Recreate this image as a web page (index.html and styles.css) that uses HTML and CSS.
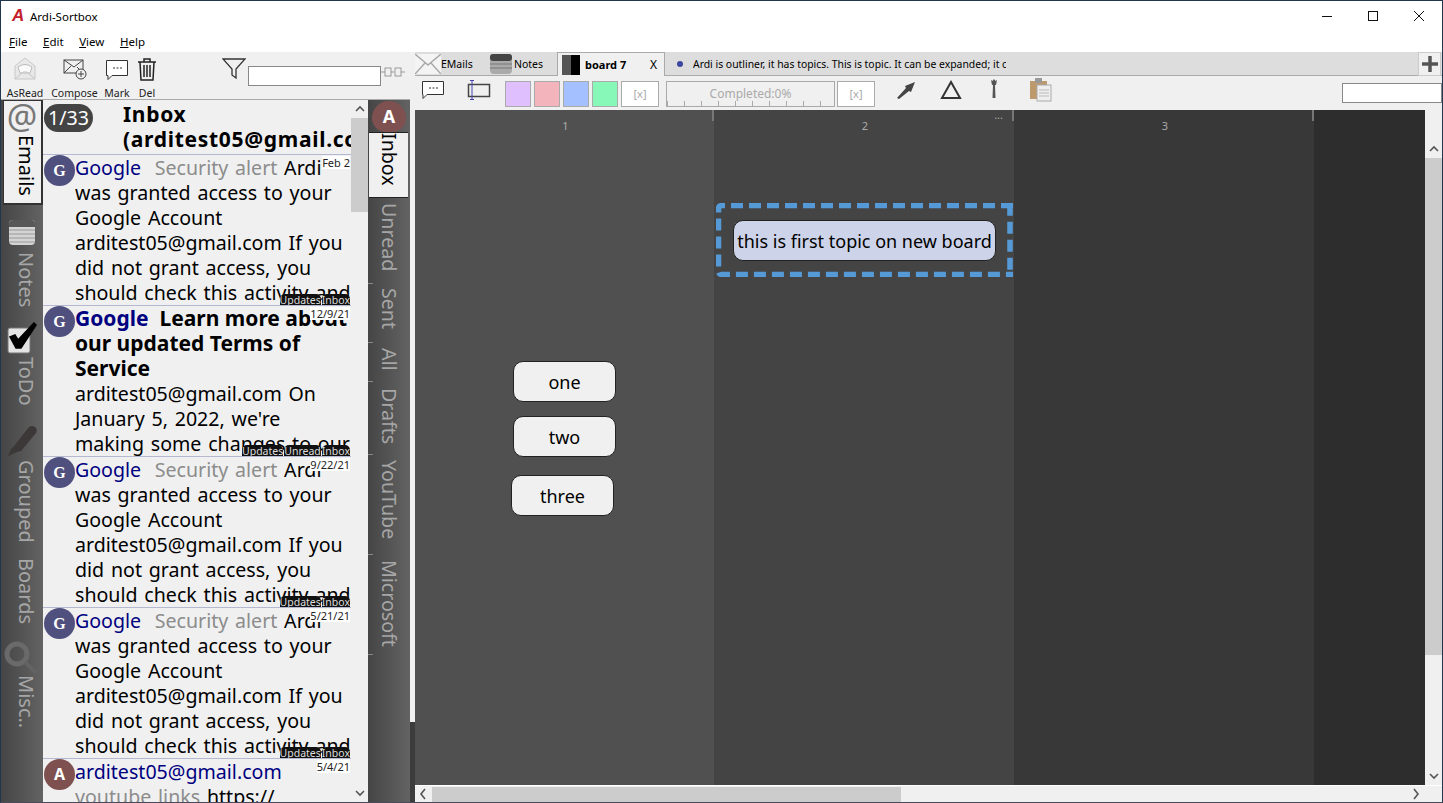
FILE: index.html
```html
<!DOCTYPE html>
<html lang="en">

<head>
    <meta charset="UTF-8">
    <title>Ardi-Sortbox</title>
    <link rel="stylesheet" href="styles.css">
</head>

<body>
    <div class="window">
        <div class="titlebar">
            <span class="logo">A</span>
            <span class="title">Ardi-Sortbox</span>
            <div class="wincontrols">
                <svg width="12" height="12" viewBox="0 0 12 12"><path d="M1 6.500h10" stroke="#111" fill="none"/></svg>
                <svg width="12" height="12" viewBox="0 0 12 12"><rect x="1.500" y="1.500" width="9" height="9" stroke="#111" fill="none"/></svg>
                <svg width="12" height="12" viewBox="0 0 12 12"><path d="M1 1l10 10M11 1L1 11" stroke="#111" fill="none"/></svg>
            </div>
        </div>
        <div class="menubar">
            <span><u>F</u>ile</span>
            <span><u>E</u>dit</span>
            <span><u>V</u>iew</span>
            <span><u>H</u>elp</span>
        </div>
        <div class="main">
            <div class="leftpane">
                <div class="mailtools">
                    <div class="toolbtn asread">
                        <svg width="24" height="24" viewBox="0 0 24 24"><path d="M2 9L12 1l10 8v13H2z" fill="#e8e8e8" stroke="#c8c8c8"/><path d="M5 10q7-5 14 0l-2 6H7z" fill="#fafafa" stroke="#bbb"/><path d="M2 22l8-7h4l8 7" fill="none" stroke="#c4c4c4"/></svg>
                        <span>AsRead</span>
                    </div>
                    <div class="toolbtn compose">
                        <svg width="24" height="24" viewBox="0 0 24 24"><rect x="1" y="3" width="19" height="13" fill="none" stroke="#444"/><path d="M1 3l10 7 9-7M1 16l7-7M20 16l-6-6" fill="none" stroke="#444"/><circle cx="18" cy="17" r="5" fill="#f0f0f0" stroke="#444"/><path d="M18 14v6M15 17h6" stroke="#444"/></svg>
                        <span>Compose</span>
                    </div>
                    <div class="toolbtn mark">
                        <svg width="24" height="24" viewBox="0 0 24 24"><path d="M1.500 3.500h21v15H7l-4 4v-4H1.500z" fill="#fff" stroke="#333"/><path d="M8 11h2M11.500 11h2M15 11h2" stroke="#333"/></svg>
                        <span>Mark</span>
                    </div>
                    <div class="toolbtn del">
                        <svg width="20" height="24" viewBox="0 0 20 24"><path d="M1 5h18M7 5V2h6v3" fill="none" stroke="#222" stroke-width="1.500"/><path d="M3 5l1 18h12l1-18" fill="none" stroke="#222" stroke-width="1.500"/><path d="M7 8v12M10 8v12M13 8v12" stroke="#222" stroke-width="1.500"/></svg>
                        <span>Del</span>
                    </div>
                    <svg class="filter" width="24" height="22" viewBox="0 0 24 22"><path d="M1 1h22l-9 10v9l-4-3v-6z" fill="none" stroke="#333" stroke-width="1.300"/></svg>
                    <input class="filterbox" type="text">
                    <svg class="plug" width="24" height="12" viewBox="0 0 24 12"><path d="M0 6h4M10 6h3M20 6h4" stroke="#999"/><rect x="4" y="2" width="6" height="8" fill="none" stroke="#999"/><rect x="14" y="2" width="6" height="8" fill="none" stroke="#999"/></svg>
                </div>
                <div class="mailbody">
                    <div class="rail leftrail">
                        <div class="railtab active emailstab">
                            <span class="at">@</span>
                            <span class="vtext">Emails</span>
                        </div>
                        <div class="railtab notestab">
                            <svg width="26" height="25" viewBox="0 0 26 25"><rect x="0" y="0" width="26" height="25" rx="4" fill="#d4d4d4"/><path d="M0 10h26M0 14h26M0 18h26M0 22h26" stroke="#999"/><path d="M0 7V4q0-4 4-4h18q4 0 4 4v3z" fill="#585858"/></svg>
                            <span class="vtext">Notes</span>
                        </div>
                        <div class="railtab todotab">
                            <svg width="30" height="32" viewBox="0 0 30 32"><rect x="1" y="6" width="22" height="25" rx="2" fill="#e4e4e4" stroke="#777"/><path d="M3 15l5-2 3 5L27 1l2 2-15 23H9z" fill="#000" stroke="#000" stroke-width="1.500"/></svg>
                            <span class="vtext">ToDo</span>
                        </div>
                        <div class="railtab groupedtab">
                            <svg width="30" height="31" viewBox="0 0 30 31"><path d="M1 31l3-7 3-3L22 2q3-2 6 0t1 6L14 26l-4 1z" fill="#3c3838"/></svg>
                            <span class="vtext">Grouped</span>
                        </div>
                        <div class="railtab boardstab">
                            <span class="vtext">Boards</span>
                        </div>
                        <div class="railtab misctab">
                            <svg width="34" height="34" viewBox="0 0 34 34"><circle cx="14" cy="14" r="10" fill="none" stroke="#6a6a6a" stroke-width="5"/><path d="M22 22l11 11" stroke="#636363" stroke-width="4"/></svg>
                            <span class="vtext">Misc..</span>
                        </div>
                    </div>
                    <div class="maillist">
                        <div class="listhead">
                            <span class="counter">1/33</span>
                            <div class="foldername">Inbox<br>(arditest05@gmail.com)</div>
                        </div>
                        <div class="row">
                            <span class="avatar avatar-g">G</span>
                            <div class="msg"><span class="from">Google</span>&nbsp; <span class="subj">Security alert</span> Ardi<br>was granted access to your<br>Google Account<br>arditest05@gmail.com If you<br>did not grant access, you<br>should check this activity and</div>
                            <span class="date">Feb 2</span>
                            <div class="tags"><span>Updates</span><span>Inbox</span></div>
                        </div>
                        <div class="row">
                            <span class="avatar avatar-g">G</span>
                            <div class="msg"><b><span class="from">Google</span>&nbsp; Learn more about<br>our updated Terms of<br>Service</b><br>arditest05@gmail.com On<br>January 5, 2022, we're<br>making some changes to our</div>
                            <span class="date">12/9/21</span>
                            <div class="tags"><span>Updates</span><span>Unread</span><span>Inbox</span></div>
                        </div>
                        <div class="row">
                            <span class="avatar avatar-g">G</span>
                            <div class="msg"><span class="from">Google</span>&nbsp; <span class="subj">Security alert</span> Ardi<br>was granted access to your<br>Google Account<br>arditest05@gmail.com If you<br>did not grant access, you<br>should check this activity and</div>
                            <span class="date">9/22/21</span>
                            <div class="tags"><span>Updates</span><span>Inbox</span></div>
                        </div>
                        <div class="row">
                            <span class="avatar avatar-g">G</span>
                            <div class="msg"><span class="from">Google</span>&nbsp; <span class="subj">Security alert</span> Ardi<br>was granted access to your<br>Google Account<br>arditest05@gmail.com If you<br>did not grant access, you<br>should check this activity and</div>
                            <span class="date">5/21/21</span>
                            <div class="tags"><span>Updates</span><span>Inbox</span></div>
                        </div>
                        <div class="row">
                            <span class="avatar avatar-a">A</span>
                            <div class="msg"><span class="from">arditest05@gmail.com</span><br><span class="subj">youtube links</span> https://</div>
                            <span class="date">5/4/21</span>
                        </div>
                    </div>
                    <div class="vscroll listscroll">
                        <svg class="chev" width="10" height="18" viewBox="0 0 10 18"><path d="M1 11l4-4 4 4" fill="none" stroke="#555" stroke-width="1.600"/></svg>
                        <div class="thumb"></div>
                        <svg class="chev down" width="10" height="18" viewBox="0 0 10 18"><path d="M1 7l4 4 4-4" fill="none" stroke="#555" stroke-width="1.600"/></svg>
                    </div>
                    <div class="rail rightrail">
                        <span class="avatar avatar-a railavatar">A</span>
                        <div class="foldertab active inboxtab"><span class="vtext">Inbox</span></div>
                        <div class="foldertab unreadtab"><span class="vtext">Unread</span></div>
                        <div class="foldertab senttab"><span class="vtext">Sent</span></div>
                        <div class="foldertab alltab"><span class="vtext">All</span></div>
                        <div class="foldertab draftstab"><span class="vtext">Drafts</span></div>
                        <div class="foldertab youtubetab"><span class="vtext">YouTube</span></div>
                        <div class="foldertab microsofttab"><span class="vtext">Microsoft</span></div>
                    </div>
                </div>
            </div>
            <div class="divider"></div>
            <div class="rightpane">
                <div class="tabbar">
                    <div class="tab emailtab">
                        <svg width="26" height="20" viewBox="0 0 26 20"><rect x="0" y="0" width="26" height="20" fill="#f4f4f4"/><path d="M0 0l13 11L26 0M0 20l10-11M26 20L16 9" fill="none" stroke="#aaa" stroke-width="1.500"/></svg>
                        <span>EMails</span>
                    </div>
                    <div class="tab notetab">
                        <svg width="22" height="20" viewBox="0 0 22 20"><rect x="0" y="0" width="22" height="20" rx="4" fill="#aaa"/><rect x="0" y="0" width="22" height="7" rx="3" fill="#444"/><path d="M0 10h22M0 14h22" stroke="#777"/></svg>
                        <span>Notes</span>
                    </div>
                    <div class="tab boardtab">
                        <span class="swatchicon"></span>
                        <b>board 7</b>
                        <span class="tabclose">X</span>
                    </div>
                    <div class="tab topictab">
                        <span class="dot"></span>
                        <span class="topictext">Ardi is outliner, it has topics. This is topic. It can be expanded; it can be collapsed</span>
                    </div>
                    <div class="plusbtn">
                        <svg width="16" height="16" viewBox="0 0 16 16"><path d="M8 0v16M0 8h16" stroke="#555" stroke-width="3.500"/></svg>
                    </div>
                </div>
                <div class="boardtools">
                    <svg class="t-comment" width="24" height="20" viewBox="0 0 24 20"><path d="M1.500 1.500h21v13H6l-4 4v-4H1.500z" fill="#fff" stroke="#333"/><path d="M8 8h2M11.500 8h2M15 8h2" stroke="#333"/></svg>
                    <svg class="t-column" width="24" height="20" viewBox="0 0 24 20"><rect x="1.500" y="4.500" width="21" height="12" fill="none" stroke="#444" stroke-width="1.500"/><path d="M5 0v20M3 .5h4M3 19.500h4" stroke="#44a" fill="none"/></svg>
                    <span class="swatch purple"></span>
                    <span class="swatch pink"></span>
                    <span class="swatch blue"></span>
                    <span class="swatch green"></span>
                    <span class="xbox">[x]</span>
                    <div class="progress">Completed:0%</div>
                    <span class="xbox">[x]</span>
                    <svg class="t-arrow" width="20" height="18" viewBox="0 0 20 18"><path d="M0 17l9-10-1-2 10-4-4 10-2-1L2 18z" fill="#444"/></svg>
                    <svg class="t-triangle" width="22" height="20" viewBox="0 0 22 20"><path d="M11 2L2 18h18z" fill="none" stroke="#333" stroke-width="2"/></svg>
                    <svg class="t-pin" width="8" height="20" viewBox="0 0 8 20"><path d="M1 1l1.500 1L4 0l1.500 2L7 1 6 6H5l.5 13h-3L3 6H2z" fill="#555"/></svg>
                    <svg class="t-clip" width="24" height="24" viewBox="0 0 24 24"><rect x="1" y="3" width="17" height="18" fill="#bc9a6c"/><rect x="6" y="0" width="7" height="5" fill="#999"/><rect x="8" y="7" width="14" height="16" fill="#eee" stroke="#aaa"/><path d="M10 12h10M10 15h10M10 18h10" stroke="#bbb"/></svg>
                    <input class="boardsearch" type="text">
                </div>
                <div class="boardarea">
                    <div class="canvas">
                        <div class="col col1"><span class="colnum">1</span></div>
                        <div class="col col2"><span class="colnum">2</span><span class="coldots">...</span></div>
                        <div class="col col3"><span class="colnum">3</span></div>
                        <div class="col col4"></div>
                        <svg class="dashgroup" width="298" height="74" viewBox="0 0 298 74"><path d="M297 2.500H6Q2.500 2.500 2.500 6V68Q2.500 71.500 6 71.500H297"/><path d="M291 2.500Q294 2.500 294 6V71"/></svg>
                        <div class="node selected">this is first topic on new board</div>
                        <div class="node one">one</div>
                        <div class="node two">two</div>
                        <div class="node three">three</div>
                    </div>
                    <div class="vscroll boardscroll">
                        <span class="spacer"></span>
                        <svg class="chev" width="10" height="18" viewBox="0 0 10 18"><path d="M1 11l4-4 4 4" fill="none" stroke="#555" stroke-width="1.600"/></svg>
                        <div class="thumb"></div>
                        <svg class="chev down" width="10" height="18" viewBox="0 0 10 18"><path d="M1 7l4 4 4-4" fill="none" stroke="#555" stroke-width="1.600"/></svg>
                    </div>
                </div>
                <div class="hscroll">
                    <svg class="hchev" width="17" height="12" viewBox="0 0 17 12"><path d="M10 1L6 6l4 5" fill="none" stroke="#555" stroke-width="1.600"/></svg>
                    <div class="hthumb"></div>
                    <svg class="hchev right" width="10" height="12" viewBox="0 0 10 12"><path d="M3 1l4 5-4 5" fill="none" stroke="#555" stroke-width="1.600"/></svg>
                </div>
            </div>
        </div>
    </div>
</body>

</html>
```

FILE: styles.css
```css
* {
    padding: 0;
    margin: 0;
    box-sizing: border-box;
}

html,
body {
    width: 100%;
    height: 100%;
    background-color: #fff;
    overflow: hidden;
    font-family: "Noto Sans", "Open Sans", sans-serif;
    color: #000;
}

.window {
    width: 1443px;
    height: 803px;
    display: flex;
    flex-direction: column;
    border-top: 1px solid #22364e;
    border-left: 1px solid #22364e;
    border-bottom: 1px solid #4a4a5c;
    border-right: 1px solid #22364e;
}

/* title + menu */
.titlebar {
    height: 32px;
    display: flex;
    align-items: center;
    padding: 0 0 2px 11px;
    font-size: 11.5px;
    flex: none;
}

.logo {
    font: italic bold 17px "Liberation Sans", sans-serif;
    color: #c4202a;
    width: 18px;
}

.wincontrols {
    margin-left: auto;
    display: flex;
    gap: 34px;
    padding-right: 17px;
    margin-top: -1px;
}

.menubar {
    height: 19px;
    display: flex;
    gap: 15.6px;
    padding-left: 8px;
    font-size: 11.5px;
    line-height: 18px;
    flex: none;
}

.main {
    flex: 1;
    display: flex;
    min-height: 0;
    background: #efefef;
}

/* left part */
.leftpane {
    width: 409px;
    display: flex;
    flex-direction: column;
    flex: none;
}

.mailtools {
    height: 48px;
    display: flex;
    align-items: flex-start;
    padding-left: 4px;
    gap: 7px;
    background: #f0f0f0;
    border-bottom: 1px solid #aaa;
    flex: none;
}

.toolbtn {
    display: flex;
    flex-direction: column;
    align-items: center;
    font-size: 10.5px;
    color: #222;
    padding-top: 5px;
    height: 46px;
    justify-content: space-between;
}

.toolbtn span {
    line-height: 14px;
    margin-bottom: -2px;
}

.asread { width: 40px; }
.compose { width: 45px; }
.mark { width: 26px; }
.del { width: 20px; }

.filter {
    margin: 6px 0 0 58px;
}

.filterbox {
    width: 133px;
    height: 20px;
    margin: 14px 0 0 -5px;
    border: 1px solid #888;
    background: #fff;
}

.plug {
    margin: 14px 0 0 -7px;
}

.mailbody {
    flex: 1;
    display: flex;
    min-height: 0;
}

.rail {
    background: linear-gradient(to right, #454545, #636363);
    flex: none;
}

.leftrail {
    width: 42px;
    display: flex;
    flex-direction: column;
    align-items: center;
}

.vtext {
    writing-mode: vertical-rl;
    font-size: 20px;
    line-height: 24px;
    color: #a6a6a6;
}

.railtab {
    width: 40px;
    display: flex;
    flex-direction: column;
    align-items: center;
    flex: none;
}

.railtab svg {
    flex: none;
}

.railtab .vtext {
    margin-left: 7px;
}

.railtab.active {
    background: #f0f0f0;
    border: 1px solid #333;
    border-width: 1px 2px 2px 1px;
    height: 105px;
    margin-left: 1px;
}

.railtab.active .vtext,
.foldertab.active .vtext {
    color: #000;
}

.at {
    font-size: 34px;
    line-height: 32px;
    color: #777;
    margin-top: -1px;
}

.emailstab .vtext {
    margin-top: 3px;
}

.notestab {
    height: 110px;
    padding-top: 15px;
}

.notestab .vtext { margin-top: 7px; }

.todotab {
    height: 105px;
    padding-top: 7px;
}

.todotab .vtext { margin-top: 3px; }

.groupedtab {
    height: 120px;
    padding-top: 5px;
}

.groupedtab .vtext { margin-top: 4px; }

.boardstab {
    height: 100px;
    padding-top: 18px;
}

.misctab {
    margin-left: -5px;
}

.misctab .vtext {
    margin-top: 1px;
    margin-left: 12px;
}

.maillist {
    width: 308px;
    background: #f0f0f0;
    overflow: hidden;
    flex: none;
}

.listhead {
    height: 54px;
    display: flex;
    position: relative;
    overflow: hidden;
}

.counter {
    width: 49px;
    height: 28px;
    margin: 4px 0 0 1px;
    border-radius: 14px;
    background: #444;
    color: #fff;
    font-size: 19.6px;
    line-height: 28px;
    text-align: center;
    flex: none;
}

.foldername {
    margin: 2px 0 0 30px;
    font-size: 21px;
    font-weight: bold;
    line-height: 25px;
    letter-spacing: .7px;
    white-space: nowrap;
}

.row {
    height: 151px;
    position: relative;
    display: flex;
    border-top: 1px solid #b4b8d0;
    overflow: hidden;
}

.avatar {
    width: 31px;
    height: 31px;
    border-radius: 50%;
    color: #fff;
    font: bold 16px/31px "Liberation Serif", serif;
    text-align: center;
    flex: none;
    margin: 0 0 0 1px;
}

.avatar-g { background: #50507e; }

.avatar-a {
    background: #7e5050;
    font-family: "Noto Sans", sans-serif;
}

.msg {
    font-size: 19.6px;
    line-height: 25px;
    word-spacing: 1.7px;
    white-space: nowrap;
}

.msg b {
    font-size: 21px;
    word-spacing: 0;
}

.from { color: #000080; }
.subj { color: #8c8c8c; }

.date {
    position: absolute;
    top: 1px;
    right: 1px;
    font-size: 11px;
    line-height: 13px;
    background: #fff;
    color: #222;
}

.tags {
    position: absolute;
    right: 1px;
    bottom: 0;
    display: flex;
    gap: 1px;
}

.tags span {
    background: #111;
    color: #ddd;
    font-size: 10.5px;
    line-height: 12px;
    height: 11px;
    border-radius: 5px 5px 0 0;
    overflow: hidden;
}

/* scrollbars */
.vscroll {
    background: #f0f0f0;
    display: flex;
    flex-direction: column;
    align-items: center;
    flex: none;
}

.listscroll {
    width: 17px;
}

.chev {
    flex: none;
}

.chev.down {
    margin-top: auto;
}

.listscroll .thumb {
    width: 100%;
    height: 94px;
    background: #ccc;
}

.rightrail {
    width: 42px;
    display: flex;
    flex-direction: column;
}

.railavatar {
    width: 34px;
    height: 31px;
    margin: 1px 0 0 4px;
    border-radius: 17px 17px 14px 14px;
    line-height: 31px;
    font-size: 18px;
}

.foldertab {
    padding-left: 9px;
    width: 34px;
    flex: none;
    position: relative;
}

.foldertab .vtext {
    font-size: 19.6px;
}

.foldertab::after {
    content: "";
    position: absolute;
    left: 0;
    bottom: 0;
    width: 5px;
    height: 1px;
    background: #888;
}

.foldertab.active {
    background: #f0f0f0;
    width: 39px;
    height: 66px;
    margin: 0 0 5px 1px;
    padding-left: 8px;
    border-top: 1px solid #222;
    border-bottom: 1px solid #222;
}

.foldertab.active::after {
    display: none;
}

.unreadtab { height: 81px; }
.senttab { height: 59px; padding-top: 4px; }
.alltab { height: 39px; padding-top: 5px; }
.draftstab { height: 73px; padding-top: 6px; }
.youtubetab { height: 100px; padding-top: 5px; }
.microsofttab { height: 100px; padding-top: 5px; }

.divider {
    width: 5px;
    background: linear-gradient(to bottom, #f0f0f0 670px, #3c3c3c 670px);
    flex: none;
}

/* right part */
.rightpane {
    flex: 1;
    min-width: 0;
    display: flex;
    flex-direction: column;
}

.tabbar {
    height: 24px;
    display: flex;
    align-items: stretch;
    background: #ddd;
    font-size: 10.5px;
    flex: none;
    border-bottom: 1px solid #aaa;
}

.tab {
    display: flex;
    align-items: center;
    overflow: hidden;
}

.emailtab { width: 75px; }
.notetab { width: 67px; gap: 2px; }

.boardtab {
    width: 108px;
    background: #f0f0f0;
    border: 1px solid #aaa;
    border-bottom: 0;
    padding-left: 4px;
    height: 24px;
}

.swatchicon {
    width: 18px;
    height: 20px;
    background: linear-gradient(to right, #555 50%, #000 50%);
}

.boardtab b {
    margin-left: 5px;
    font-size: 11px;
}

.tabclose {
    margin-left: auto;
    padding-right: 7px;
    font-size: 12px;
}

.topictab {
    width: 752px;
    padding-left: 11px;
    gap: 10px;
    margin-left: 1px;
}

.dot {
    width: 6px;
    height: 6px;
    border-radius: 50%;
    background: #3c46a0;
    flex: none;
}

.topictext {
    width: 313px;
    overflow: hidden;
    white-space: nowrap;
    font-size: 10.4px;
}

.plusbtn {
    width: 23px;
    background: #f0f0f0;
    border: 1px solid #ccc;
    display: flex;
    align-items: center;
    justify-content: center;
    height: 24px;
}

.boardtools {
    height: 34px;
    display: flex;
    align-items: flex-start;
    background: #f0f0f0;
    flex: none;
}

.t-comment { margin: 4px 0 0 6px; }
.t-column { margin: 4px 0 0 22px; }

.swatch {
    width: 26px;
    height: 26px;
    margin: 5px 0 0 3px;
    border: 1px solid #aaa;
}

.t-column + .swatch { margin-left: 14px; }

.purple { background: #e0bfff; }
.pink { background: #f4b4bb; }
.blue { background: #a4c0ff; }
.green { background: #88f8b8; }

.xbox {
    width: 38px;
    height: 26px;
    margin: 5px 0 0 3px;
    border: 1px solid #aaa;
    background: #fff;
    color: #aaa;
    font-size: 11px;
    line-height: 24px;
    text-align: center;
}

.progress {
    width: 169px;
    height: 26px;
    margin: 5px 2px 0 7px;
    border: 1px solid #aaa;
    color: #aaa;
    font-size: 12px;
    line-height: 24px;
    text-align: center;
    background: repeating-linear-gradient(to right, #aaa 0, #aaa 1px, transparent 1px, transparent 17px) 0 100% / 100% 5px no-repeat;
}

.progress + .xbox { margin-left: 0; }

.t-arrow { margin: 5px 0 0 22px; }
.t-triangle { margin: 4px 0 0 23px; }
.t-pin { margin: 3px 0 0 28px; }
.t-clip { margin: 2px 0 0 31px; }

.boardsearch {
    width: 100px;
    height: 20px;
    margin: 7px 0 0 auto;
    border: 1px solid #888;
    background: #fff;
}

.boardarea {
    flex: 1;
    display: flex;
    min-height: 0;
}

.canvas {
    width: 1010px;
    display: flex;
    position: relative;
    overflow: hidden;
    flex: none;
}

.col {
    height: 100%;
    width: 300px;
    padding-left: 2px;
    text-align: center;
    position: relative;
    color: #aaa;
    font-size: 11px;
    line-height: 32px;
}

.col::after {
    content: "";
    position: absolute;
    top: 0;
    right: 0;
    width: 2px;
    height: 11px;
    background: #777;
}

.col1 { width: 299px; background: #505050; }
.col2 { background: #444; }
.col3 { background: #383838; }
.col4 { flex: 1; background: #2d2d2d; }
.col4::after { display: none; }

.coldots {
    position: absolute;
    top: -11px;
    right: 11px;
}

.node {
    position: absolute;
    height: 41px;
    border: 1px solid #222;
    border-radius: 10px;
    background: #f0f0f0;
    font-size: 18px;
    line-height: 40px;
    text-align: center;
    width: 103px;
    white-space: nowrap;
}

.selected {
    left: 318px;
    top: 110px;
    width: 263px;
    background: #cdd3e8;
}

.one { left: 98px; top: 251px; }
.two { left: 98px; top: 306px; }
.three { left: 96px; top: 365px; }

.dashgroup {
    position: absolute;
    left: 301px;
    top: 93px;
    fill: none;
    stroke: #559ad6;
    stroke-width: 5.5;
    stroke-dasharray: 12 6;
}

.boardscroll {
    flex: 1;
}

.boardscroll .spacer {
    height: 30px;
    flex: none;
}

.boardscroll .thumb {
    width: 100%;
    height: 497px;
    background: #ccc;
}

.hscroll {
    height: 17px;
    display: flex;
    align-items: center;
    background: #f0f0f0;
    flex: none;
    border-top: 1px solid #fff;
}

.hchev {
    flex: none;
}

.hchev.right {
    margin-left: auto;
    margin-right: 21px;
}

.hthumb {
    width: 469px;
    height: 15px;
    background: #ccc;
}
```
